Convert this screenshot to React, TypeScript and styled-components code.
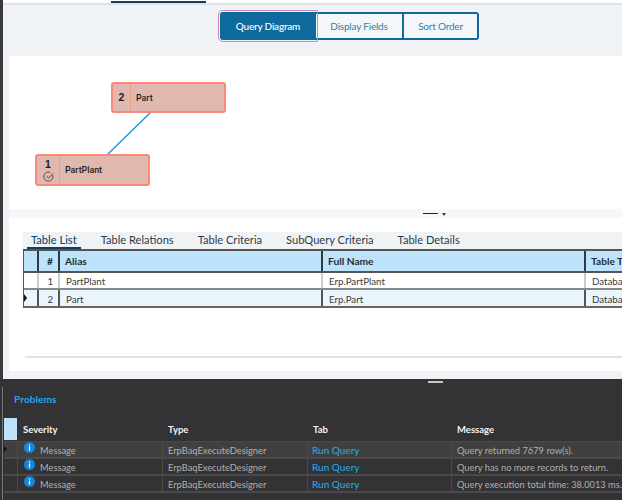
import styled, { createGlobalStyle } from "styled-components";

const Global = createGlobalStyle`
  html, body { margin: 0; padding: 0; }
  body { width: 622px; height: 500px; overflow: hidden; font-family: "Lato", "Noto Sans", sans-serif; }
`;

const Page = styled.div`
  width: 622px;
  height: 500px;
  display: flex;
  flex-direction: column;
  overflow: hidden;
`;

const Designer = styled.div`
  height: 379px;
  background: #eff3f6;
  border-left: 3px solid #3a3a3c;
  box-sizing: border-box;
  display: flex;
  flex-direction: column;
`;

const TopStrip = styled.div`
  height: 3px;
  background: #fff;
  border-bottom: 2px solid #dfe3e6;
  padding-left: 108px;
`;

const ActiveTab = styled.div`
  width: 95px;
  height: 2px;
  margin-top: 1px;
  background: #0d3f66;
`;

const SegmentRow = styled.div`
  height: 51px;
  padding: 7px 0 0 217px;
  box-sizing: border-box;
  display: flex;
`;

const Segment = styled.div<{ $active?: boolean; $w: number; $first?: boolean; $last?: boolean }>`
  position: relative;
  width: ${(p) => p.$w}px;
  height: 28px;
  box-sizing: border-box;
  border: 2px solid #0f6a9e;
  border-left-width: ${(p) => (p.$first ? 2 : 0)}px;
  border-radius: ${(p) => (p.$first ? "3px 0 0 3px" : p.$last ? "0 3px 3px 0" : "0")};
  background: ${(p) => (p.$active ? "#0f6a9e" : "#f4f7f9")};
  color: ${(p) => (p.$active ? "#fff" : "#2f7fae")};
  font-size: 10px;
  letter-spacing: -0.2px;
  font-weight: ${(p) => (p.$active ? 500 : 400)};
  display: flex;
  align-items: center;
  justify-content: center;
  outline: ${(p) => (p.$active ? "1px solid #c78fb8" : "none")};
  outline-offset: 1px;
  z-index: ${(p) => (p.$active ? 1 : 0)};
`;

const DiagramPanel = styled.div`
  position: relative;
  height: 153px;
  margin-left: 6px;
  background: #fff;
`;

const Link = styled.svg`
  position: absolute;
  left: 0;
  top: 0;
  width: 613px;
  height: 153px;
`;

const TableNode = styled.div<{ $x: number; $y: number; $h: number }>`
  position: absolute;
  left: ${(p) => p.$x}px;
  top: ${(p) => p.$y}px;
  width: 115px;
  height: ${(p) => p.$h}px;
  box-sizing: border-box;
  background: #e0b8b0;
  border: 2px solid #fa8a78;
  border-radius: 3px;
  display: flex;
  font-family: "Liberation Sans", sans-serif;
  color: #1c1c1c;
`;

const NodeIndex = styled.div<{ $w: number }>`
  width: ${(p) => p.$w}px;
  flex: none;
  border-right: 1px solid #f09a88;
  box-sizing: border-box;
  display: flex;
  flex-direction: column;
  align-items: center;
  justify-content: center;
  gap: 1px;
  font-size: 10.5px;
  line-height: 11px;
  font-weight: 700;
`;

const NodeName = styled.div`
  padding-left: 5px;
  display: flex;
  align-items: center;
  font-family: "Roboto", sans-serif;
  font-size: 8.8px;
  font-weight: 500;
`;

const Splitter = styled.div`
  height: 9px;
  background: #f6f7f8;
  margin-left: 6px;
  display: flex;
  align-items: center;
  padding-left: 414px;
  gap: 4px;
`;

const SplitDash = styled.div`
  width: 15px;
  height: 1.5px;
  background: #222;
`;

const SplitArrow = styled.div`
  width: 0;
  height: 0;
  margin-top: 2px;
  border-left: 2px solid transparent;
  border-right: 2px solid transparent;
  border-top: 3px solid #444;
`;

const DetailPanel = styled.div`
  height: 153px;
  margin-left: 6px;
  padding: 14px 0 0 14px;
  box-sizing: border-box;
  background: #fff;
  display: flex;
  flex-direction: column;
`;

const TabBar = styled.div`
  height: 17px;
  background: #eff3f6;
  display: flex;
  padding-left: 8px;
  gap: 24px;
  font-size: 11.1px;
  line-height: 16px;
`;

const TabLabel = styled.div<{ $active?: boolean }>`
  height: 15px;
  color: ${(p) => (p.$active ? "#0d4a75" : "#2d3a45")};
  font-weight: ${(p) => (p.$active ? 500 : 400)};
  border-bottom: ${(p) => (p.$active ? "2px solid #0d3f66" : "0")};
  white-space: nowrap;
  margin: ${(p) => (p.$active ? "0 -4px" : "0")};
  padding: ${(p) => (p.$active ? "0 4px" : "0")};
`;

const Grid = styled.div`
  border-top: 2px solid #555;
  border-bottom: 2px solid #666;
  border-left: 1px solid #555;
`;

const columns = "15px 21px 263px 263px 1fr";

const HeadRow = styled.div`
  height: 22px;
  box-sizing: border-box;
  display: grid;
  grid-template-columns: ${columns};
  background: #bde3fa;
  border-bottom: 2px solid #555;
  color: #1f2d38;
  font-size: 10.2px;
  font-weight: 700;
`;

const HeadCell = styled.div<{ $right?: boolean }>`
  border-right: 2px solid #2d3a45;
  padding: 0 5px;
  display: flex;
  align-items: center;
  justify-content: ${(p) => (p.$right ? "flex-end" : "flex-start")};
  white-space: nowrap;
  overflow: hidden;
  &:last-child { border-right: 0; }
`;

const BodyRow = styled.div<{ $selected?: boolean }>`
  height: ${(p) => (p.$selected ? 16 : 17)}px;
  box-sizing: border-box;
  display: grid;
  grid-template-columns: ${columns};
  background: ${(p) => (p.$selected ? "#e9f6fe" : "#fff")};
  border-bottom: ${(p) => (p.$selected ? "0" : "2px solid #888")};
  color: #3a3a3a;
  font-size: 9.7px;
`;

const BodyCell = styled.div<{ $right?: boolean; $dark?: boolean }>`
  position: relative;
  border-right: 2px solid ${(p) => (p.$dark ? "#555" : "#ccc")};
  padding: 1px 5px 0 6px;
  display: flex;
  align-items: center;
  justify-content: ${(p) => (p.$right ? "flex-end" : "flex-start")};
  white-space: nowrap;
  overflow: hidden;
  &:last-child { border-right: 0; }
`;

const RowMarker = styled.div`
  position: absolute;
  left: 0;
  top: 4px;
  width: 0;
  height: 0;
  border-top: 4px solid transparent;
  border-bottom: 4px solid transparent;
  border-left: 3px solid #111;
`;

const BottomRule = styled.div`
  height: 2px;
  margin: 48px 0 0 2px;
  background: #e2e2e2;
`;

const Problems = styled.div`
  position: relative;
  flex: 1;
  background: #333234;
  padding-left: 3px;
  display: flex;
  flex-direction: column;
`;

const SideRail = styled.div`
  position: absolute;
  left: 2px;
  top: 8px;
  bottom: 0;
  width: 1px;
  background: #777;
`;

const DragHandle = styled.div`
  position: absolute;
  left: 428px;
  top: 2px;
  width: 15px;
  height: 2px;
  background: #c8c8c8;
`;

const ProblemsTitle = styled.div`
  height: 39px;
  padding: 13px 0 0 11px;
  box-sizing: border-box;
  color: #22a7e6;
  font-size: 10.2px;
  font-weight: 700;
  line-height: 14px;
`;

const problemColumns = "13px 145px 145px 144px 1fr";

const ProblemHead = styled.div`
  height: 23px;
  display: grid;
  grid-template-columns: ${problemColumns};
  margin-left: 1px;
  color: #f2f2f2;
  font-size: 9.5px;
  font-weight: 700;
  border-bottom: 1px solid #4a4a4a;
`;

const HeadSwatch = styled.div`
  background: #bde3fa;
  margin-bottom: 1px;
`;

const ProblemHeadCell = styled.div`
  padding-left: 6px;
  display: flex;
  align-items: center;
`;

const ProblemRow = styled.div<{ $selected?: boolean }>`
  position: relative;
  height: 17px;
  box-sizing: border-box;
  display: grid;
  grid-template-columns: ${problemColumns};
  margin-left: 1px;
  background: ${(p) => (p.$selected ? "#404040" : "#333234")};
  border-bottom: 2px solid #4a4a4a;
  font-size: 9.3px;
`;

const ProblemCell = styled.div<{ $link?: boolean }>`
  padding: ${(p) => (p.$link ? "0 0 0 4px" : "1px 0 0 5px")};
  border-left: 1px solid #4a4a4a;
  display: flex;
  align-items: center;
  white-space: nowrap;
  overflow: hidden;
  color: ${(p) => (p.$link ? "#22a7e6" : "#b0b0b0")};
  font-size: ${(p) => (p.$link ? "10px" : "inherit")};
  font-weight: ${(p) => (p.$link ? 500 : 400)};
`;

const Info = styled.svg`
  width: 11px;
  height: 11px;
  margin: -6px 5px 0 1px;
  flex: none;
`;

const ProblemMarker = styled.div`
  position: absolute;
  left: 0;
  top: 4px;
  width: 0;
  height: 0;
  border-top: 3px solid transparent;
  border-bottom: 3px solid transparent;
  border-left: 3px solid #111;
`;

const tableRows = [
  { n: 1, alias: "PartPlant", full: "Erp.PartPlant" },
  { n: 2, alias: "Part", full: "Erp.Part" },
];

const messages = [
  "Query returned 7679 row(s).",
  "Query has no more records to return.",
  "Query execution total time: 38.0013 ms.",
];

export default function App() {
  return (
    <Page>
      <Global />
      <Designer>
        <TopStrip>
          <ActiveTab />
        </TopStrip>
        <SegmentRow>
          <Segment $active $first $w={96}>Query Diagram</Segment>
          <Segment $w={88}>Display Fields</Segment>
          <Segment $last $w={75}>Sort Order</Segment>
        </SegmentRow>
        <DiagramPanel>
          <Link>
            <line x1="142" y1="56" x2="99" y2="98" stroke="#1e96e8" strokeWidth="1.5" />
          </Link>
          <TableNode $x={102} $y={26} $h={31}>
            <NodeIndex $w={18}>2</NodeIndex>
            <NodeName>Part</NodeName>
          </TableNode>
          <TableNode $x={26} $y={98} $h={32}>
            <NodeIndex $w={23}>
              1
              <svg width="11" height="11" viewBox="0 0 12 12" fill="none" stroke="#444" strokeWidth="1">
                <path d="M10.6 4.6A5 5 0 1 1 8 1.6" />
                <path d="M3.8 5.6 6 7.8 11 2.6" />
              </svg>
            </NodeIndex>
            <NodeName>PartPlant</NodeName>
          </TableNode>
        </DiagramPanel>
        <Splitter>
          <SplitDash />
          <SplitArrow />
        </Splitter>
        <DetailPanel>
          <TabBar>
            <TabLabel $active>Table List</TabLabel>
            <TabLabel>Table Relations</TabLabel>
            <TabLabel>Table Criteria</TabLabel>
            <TabLabel>SubQuery Criteria</TabLabel>
            <TabLabel>Table Details</TabLabel>
          </TabBar>
          <Grid>
            <HeadRow>
              <HeadCell />
              <HeadCell $right>#</HeadCell>
              <HeadCell>Alias</HeadCell>
              <HeadCell>Full Name</HeadCell>
              <HeadCell>Table Type</HeadCell>
            </HeadRow>
            {tableRows.map((r) => (
              <BodyRow key={r.n} $selected={r.n === 2}>
                <BodyCell $dark={r.n === 2}>{r.n === 2 && <RowMarker />}</BodyCell>
                <BodyCell $right $dark={r.n === 2}>{r.n}</BodyCell>
                <BodyCell $dark={r.n === 2}>{r.alias}</BodyCell>
                <BodyCell $dark={r.n === 2}>{r.full}</BodyCell>
                <BodyCell>Database</BodyCell>
              </BodyRow>
            ))}
          </Grid>
          <BottomRule />
        </DetailPanel>
      </Designer>
      <Problems>
        <SideRail />
        <DragHandle />
        <ProblemsTitle>Problems</ProblemsTitle>
        <ProblemHead>
          <HeadSwatch />
          <ProblemHeadCell>Severity</ProblemHeadCell>
          <ProblemHeadCell>Type</ProblemHeadCell>
          <ProblemHeadCell>Tab</ProblemHeadCell>
          <ProblemHeadCell>Message</ProblemHeadCell>
        </ProblemHead>
        {messages.map((m, i) => (
          <ProblemRow key={m} $selected={i === 0}>
            {i === 0 && <ProblemMarker />}
            <div />
            <ProblemCell>
              <Info viewBox="0 0 12 12">
                <circle cx="6" cy="6" r="6" fill="#1487d8" />
                <rect x="5.3" y="5" width="1.4" height="4.4" fill="#fff" />
                <rect x="5.3" y="2.6" width="1.4" height="1.4" fill="#fff" />
              </Info>
              Message
            </ProblemCell>
            <ProblemCell>ErpBaqExecuteDesigner</ProblemCell>
            <ProblemCell $link>Run Query</ProblemCell>
            <ProblemCell>{m}</ProblemCell>
          </ProblemRow>
        ))}
      </Problems>
    </Page>
  );
}
